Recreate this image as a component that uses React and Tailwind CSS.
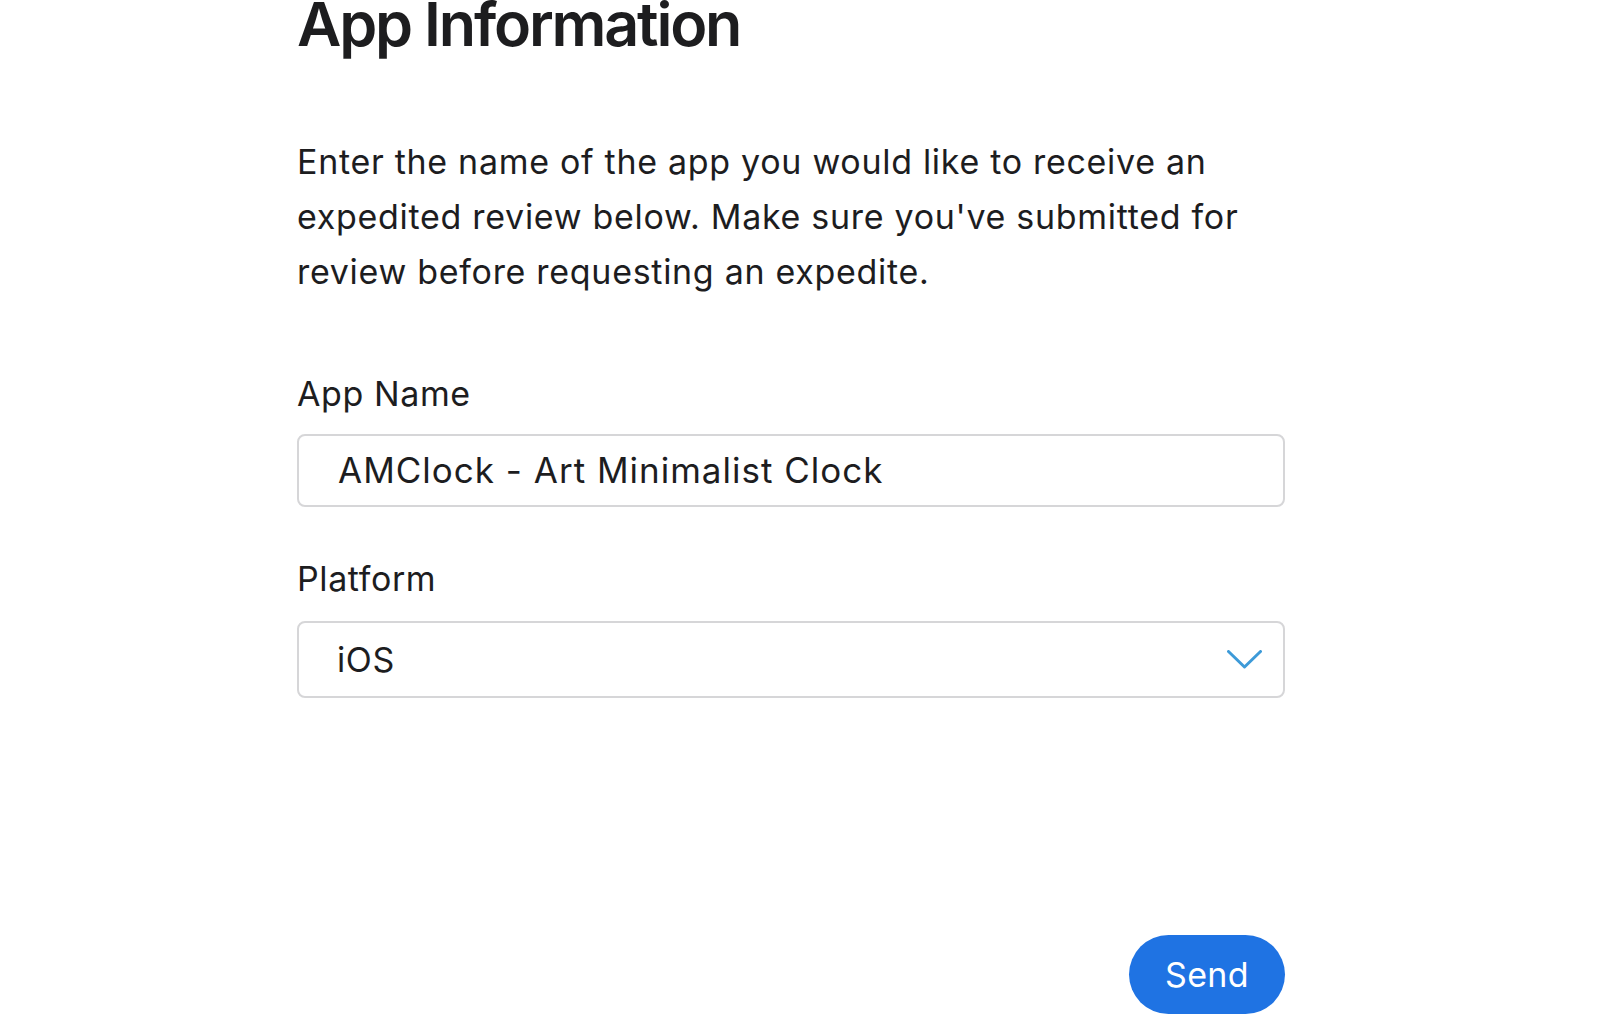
export default function App() {
  return (
    <div className="min-h-screen bg-white text-[#1d1d1f]" style={{ fontFamily: 'Inter, "Noto Sans", sans-serif' }}>
      <div className="ml-[297px] w-[988px] -mt-[12px]">
        {/* Heading */}
        <h1 className="text-[61px] font-semibold leading-[72px] tracking-[-2.2px]">App Information</h1>

        {/* Description */}
        <p className="mt-[74px] text-[34px] leading-[55px] tracking-[0.7px] pr-[40px]">
          Enter the name of the app you would like to receive an expedited review below. Make sure you've submitted for review before requesting an expedite.
        </p>

        {/* App Name */}
        <label className="block mt-[75px] text-[34px] leading-[40px] tracking-[0.6px]">App Name</label>
        <div className="mt-[20px] h-[73px] rounded-lg border-2 border-[#d6d6d8] flex items-center pl-[39px] text-[35px] tracking-[1px]">
          AMClock - Art Minimalist Clock
        </div>

        {/* Platform */}
        <label className="block mt-[52px] text-[34px] leading-[40px] tracking-[0.6px]">Platform</label>
        <div className="mt-[22px] h-[77px] rounded-lg border-2 border-[#d6d6d8] flex items-center justify-between pl-[38px] pr-[21px] text-[34px] tracking-[0.6px]">
          <span>iOS</span>
          <svg width="35" height="19" viewBox="0 0 35 19" fill="none">
            <path d="M1.5 1.5 L17.5 17 L33.5 1.5" stroke="#3d9ad8" strokeWidth="3" strokeLinecap="round" strokeLinejoin="round" />
          </svg>
        </div>

        {/* Send */}
        <div className="flex justify-end mt-[237px]">
          <button className="h-[79px] w-[156px] rounded-full bg-[#1f73e3] text-white text-[34px] tracking-[0.4px]">
            Send
          </button>
        </div>
      </div>
    </div>
  );
}
